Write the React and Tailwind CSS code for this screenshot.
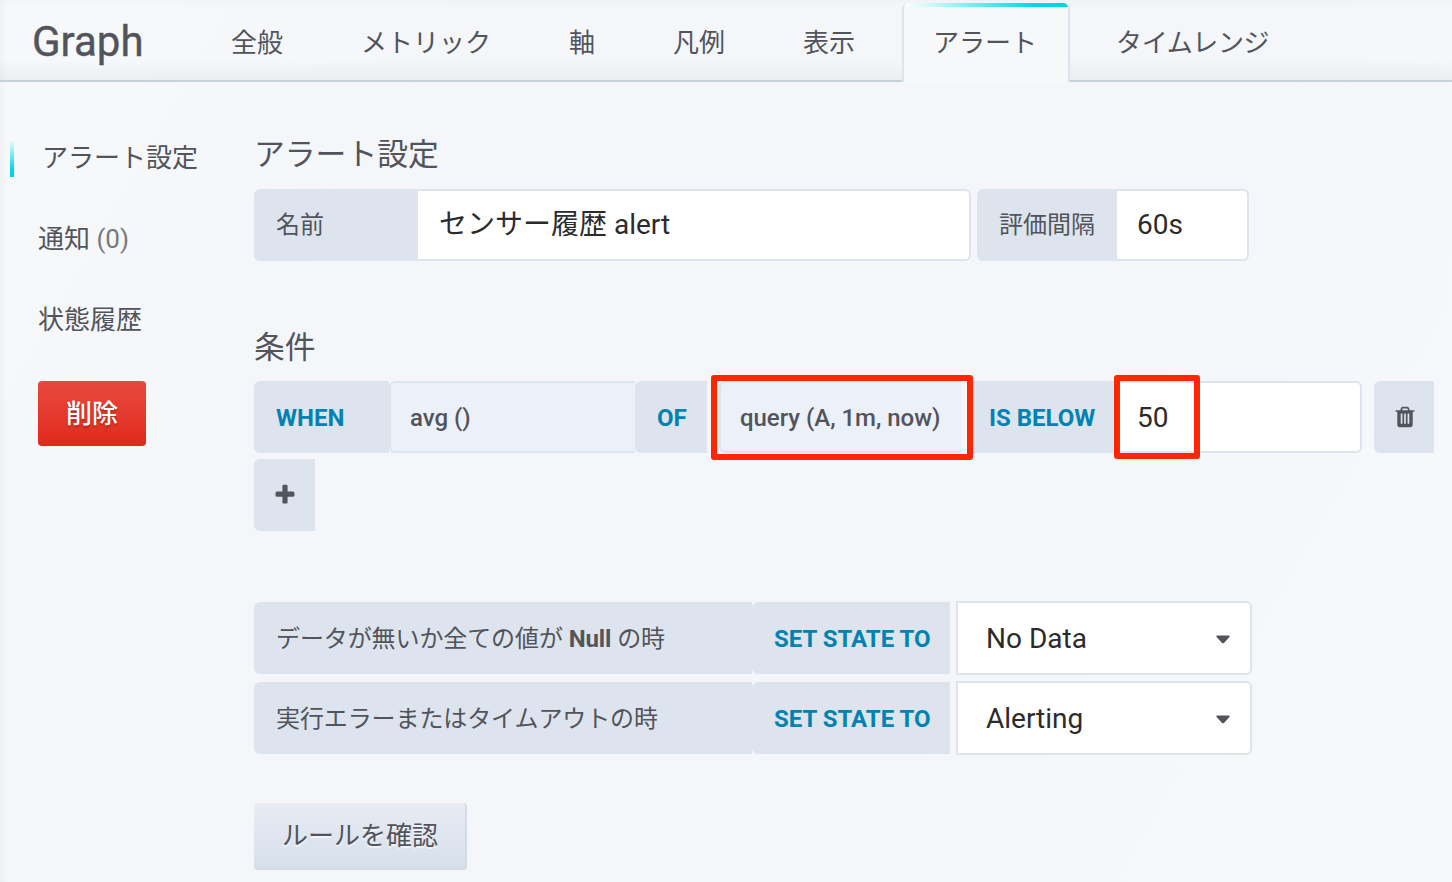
const TABS = ['全般', 'メトリック', '軸', '凡例', '表示', 'アラート', 'タイムレンジ'];

function TrashIcon() {
  return (
    <svg className="size-6 shrink-0" viewBox="0 0 1792 1792" fill="currentColor">
      <path d="M704 1376v-704q0-14-9-23t-23-9h-64q-14 0-23 9t-9 23v704q0 14 9 23t23 9h64q14 0 23-9t9-23zm256 0v-704q0-14-9-23t-23-9h-64q-14 0-23 9t-9 23v704q0 14 9 23t23 9h64q14 0 23-9t9-23zm256 0v-704q0-14-9-23t-23-9h-64q-14 0-23 9t-9 23v704q0 14 9 23t23 9h64q14 0 23-9t9-23zm-544-992h448l-48-117q-7-9-17-11h-317q-10 2-17 11zm928 32v64q0 14-9 23t-23 9h-96v948q0 83-47 143.5t-113 60.5h-832q-66 0-113-58.5t-47-141.5v-952h-96q-14 0-23-9t-9-23v-64q0-14 9-23t23-9h309l70-167q15-37 54-63t79-26h320q40 0 79 26t54 63l70 167h309q14 0 23 9t9 23z" />
    </svg>
  );
}

function PlusIcon() {
  return (
    <svg className="size-6 shrink-0" viewBox="0 0 1792 1792" fill="currentColor">
      <path d="M1600 736v192q0 40-28 68t-68 28h-416v416q0 40-28 68t-68 28h-192q-40 0-68-28t-28-68v-416h-416q-40 0-68-28t-28-68v-192q0-40 28-68t68-28h416v-416q0-40 28-68t68-28h192q40 0 68 28t28 68v416h416q40 0 68 28t28 68z" />
    </svg>
  );
}

function Label({ className = '', children }) {
  return (
    <div className={`flex h-18 shrink-0 items-center whitespace-pre rounded-l-md bg-[#dde4ed] pl-[22px] text-2xl ${className}`}>
      {children}
    </div>
  );
}

function Keyword({ className = '', children }) {
  return <Label className={`pt-0.5 font-bold text-[#0083b3] ${className}`}>{children}</Label>;
}

function IconButton({ className = '', children }) {
  return (
    <button className={`flex h-18 shrink-0 items-center justify-center rounded-l-md bg-[#dde4ed] pl-px ${className}`}>
      {children}
    </button>
  );
}

function Field({ className = '', children }) {
  return (
    <div className={`flex h-18 shrink-0 items-center rounded-r-md border-2 border-l-0 border-[#dde4ed] bg-white pl-5 text-[28px] text-[#2b2b2e] ${className}`}>
      {children}
    </div>
  );
}

function Part({ className = '', children }) {
  return (
    <div className={`flex h-18 shrink-0 items-center rounded-l-md border-2 border-r-0 border-[#dde4ed] bg-[#ecf0f8] pl-[19px] pt-0.5 text-2xl font-medium tracking-[-0.03px] ${className}`}>
      {children}
    </div>
  );
}

function StateRow({ label, value }) {
  return (
    <div className="flex h-18 items-center">
      <Label className="w-[498px] pt-px tracking-[-0.1px]">{label}</Label>
      <Keyword className="w-[198px]">SET STATE TO</Keyword>
      <div className="ml-1.5 flex h-[74px] w-[296px] items-center justify-between rounded-r-md border-2 border-[#dde4ed] bg-white pl-7 pr-5 pt-0.5 text-[28px] text-[#2b2b2e]">
        <span>{value}</span>
        <svg className="h-[9px] w-[14px] text-[#52545c]" viewBox="0 0 14 9" fill="currentColor">
          <path d="M1.2 0.5h11.6q1.4 0.4 0.6 1.6l-5.4 5.8q-1 0.8-2 0l-5.4-5.8q-0.8-1.2 0.6-1.6z" />
        </svg>
      </div>
    </div>
  );
}

export default function App() {
  return (
    <div className="h-[882px] w-[1452px] overflow-hidden bg-[linear-gradient(-60deg,#f7f8fa_10%,#f4f6fa_32%,#f4f6fa_76%,#f7f8f9_94%)] font-['Roboto','Noto_Sans_CJK_JP',sans-serif] text-[#52545c] shadow-[inset_8px_0_8px_-6px_rgba(0,0,0,0.04)]">
      <header className="flex h-[82px] items-end border-b-2 border-[#c5d1dc] bg-[linear-gradient(to_bottom,rgba(0,0,0,0.015)_0,transparent_8px,transparent_60px,rgba(0,0,0,0.04)_100%)]">
        <h1 className="flex h-[79px] w-[200px] shrink-0 items-center pl-8 pt-0.5 text-[42px] [-webkit-text-stroke:0.4px_#52545c]">Graph</h1>
        <nav className="-mb-0.5 flex gap-3.5">
          {TABS.map((tab) =>
            tab === 'アラート' ? (
              <div key={tab} className="flex h-[79px] flex-col overflow-hidden rounded-t-md border-x-2 border-[#dde4ed] bg-[#f7f8fa]">
                <div className="h-1 bg-[linear-gradient(to_right,#ffffff,#00d9e2_80%,#00d4e0)]" />
                <div className="flex h-[72px] items-center pl-[29px] pr-[31px] text-[26px]">{tab}</div>
              </div>
            ) : (
              <div
                key={tab}
                className="flex h-[79px] items-center whitespace-nowrap pl-[31px] pr-[33px] pt-0.5 text-[26px] last:pl-8 last:tracking-[-0.4px]"
              >
                {tab}
              </div>
            ),
          )}
        </nav>
      </header>

      <div className="flex">
        <aside className="w-[254px] shrink-0 pl-2.5 pt-[57px] text-[26px] leading-[38px]">
          <div className="flex">
            <div className="h-[38px] w-1 bg-[linear-gradient(to_bottom,rgba(255,255,255,0.6),#00d9e2_80%,#00d4e0)]" />
            <span className="pl-7">アラート設定</span>
          </div>
          <div className="mt-[43px] pl-7">
            通知 <span className="text-[#767980]">(0)</span>
          </div>
          <div className="mt-[43px] pl-7">状態履歴</div>
          <button className="ml-7 mt-[42px] flex h-[65px] w-[108px] items-center justify-center rounded bg-linear-to-b from-[#e8493d] to-[#e0281b] font-medium text-white [text-shadow:0_2px_2px_rgba(0,0,0,0.25)]">
            削除
          </button>
        </aside>

        <main className="flex-1 pt-[50px]">
          <h2 className="h-[57px] pt-0.5 text-[30.8px] leading-[42px]">アラート設定</h2>
          <div className="flex">
            <Label className="w-[164px]">名前</Label>
            <Field className="w-[553px]">
              <span className="pl-px">センサー履歴 alert</span>
            </Field>
            <Label className="ml-1.5 w-[140px]">評価間隔</Label>
            <Field className="w-[132px]">60s</Field>
          </div>

          <h2 className="mt-16 h-14 pt-0.5 text-[30.8px] leading-[42px]">条件</h2>
          <div className="flex">
            <Keyword className="w-[135px]">WHEN</Keyword>
            <Part className="w-[246px]">avg ()</Part>
            <Keyword className="w-[72px]">OF</Keyword>
            <div className="relative ml-3 w-[248px]">
              <Part className="w-[242px]">query (A, 1m, now)</Part>
              <div className="absolute -left-[8.5px] -top-1.5 z-10 h-[85px] w-[262px] rounded-[3px] border-6 border-[#ff2600]" />
            </div>
            <Keyword className="w-[150px] rounded-l-none">IS BELOW</Keyword>
            <div className="relative">
              <Field className="w-[245px] pt-0.5">50</Field>
              <div className="absolute -left-[3.5px] -top-1.5 z-10 h-[84px] w-[86px] rounded-[3px] border-6 border-[#ff2600]" />
            </div>
            <IconButton className="ml-3 w-[60px]">
              <TrashIcon />
            </IconButton>
          </div>
          <IconButton className="mt-1.5 w-[61px]">
            <PlusIcon />
          </IconButton>

          <div className="mt-[71px] flex flex-col gap-2">
            <StateRow label={<>データが無いか全ての値が <b className="font-bold">Null</b> の時</>} value="No Data" />
            <StateRow label="実行エラーまたはタイムアウトの時" value="Alerting" />
          </div>

          <button className="mt-[49px] flex h-[67px] w-[213px] items-center rounded border-b-2 border-r-2 border-[#d6dbe2] bg-linear-to-b from-[#e7ecf4] to-[#d8e0ea] pl-7 pt-0.5 text-[26px] [text-shadow:0_2px_1px_rgba(255,255,255,0.6)]">
            ルールを確認
          </button>
        </main>
      </div>
    </div>
  );
}
